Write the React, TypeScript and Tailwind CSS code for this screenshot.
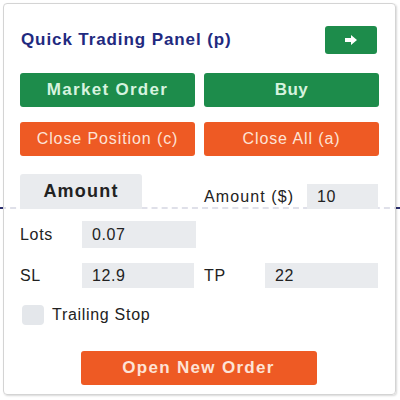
import React, { useState } from 'react';

export default function App() {
  const [amount, setAmount] = useState('10');
  const [lots, setLots] = useState('0.07');
  const [sl, setSl] = useState('12.9');
  const [tp, setTp] = useState('22');
  const [trailing, setTrailing] = useState(false);

  const input =
    'h-full w-full bg-[#e9ebee] px-[10px] text-[16px] tracking-[0.6px] text-[#222] outline-none';
  const label = 'text-[16px] tracking-[0.7px] text-[#222]';

  return (
    <div className="relative h-[400px] w-[400px] bg-white font-['Liberation_Sans',Arial,sans-serif]">
      {/* chart price line behind the panel */}
      <div className="absolute left-0 right-0 top-[207px] border-t-2 border-dashed border-[#2b2f6e]" />

      <div className="absolute left-[3px] top-[3px] flex h-[392px] w-[393px] flex-col rounded-[4px] border border-[#d4d4d4] bg-white/85 px-[16px] shadow-[1px_1px_2px_rgba(0,0,0,0.15)]">
        <div className="mt-[22px] flex h-[28px] items-center justify-between">
          <h1 className="ml-[1px] text-[17px] font-bold tracking-[0.9px] text-[#1f2a80]">Quick Trading Panel (p)</h1>
          <button className="mr-[2px] flex h-[28px] w-[52px] items-center justify-center rounded-[3px] bg-[#1d8c4b]">
            <svg width="14" height="12" viewBox="0 0 14 12">
              <path d="M1 4h6V1l6 5-6 5V8H1z" fill="#fff" />
            </svg>
          </button>
        </div>

        <div className="mt-[19px] grid grid-cols-2 gap-[9px]">
          <button className="h-[34px] rounded-[3px] bg-[#1d8c4b] text-[17px] font-bold tracking-[1.3px] text-[#d6f3df]">
            Market Order
          </button>
          <button className="h-[34px] rounded-[3px] bg-[#1d8c4b] text-[17px] font-bold tracking-[0.5px] text-[#d6f3df]">
            Buy
          </button>
        </div>

        <div className="mt-[15px] grid grid-cols-2 gap-[9px]">
          <button className="h-[34px] rounded-[3px] bg-[#ee5a24] text-[16px] tracking-[0.9px] text-[#fde3d6]">
            Close Position (c)
          </button>
          <button className="h-[34px] rounded-[3px] bg-[#ee5a24] text-[16px] tracking-[0.9px] text-[#fde3d6]">
            Close All (a)
          </button>
        </div>

        <div className="mt-[18px] flex items-start">
          <div className="flex h-[35px] w-[122px] items-center justify-center rounded-t-[3px] bg-[#e9ebee] text-[18px] font-bold tracking-[1.2px] text-[#222]">
            Amount
          </div>
          <div className="ml-[62px] mt-[10px] flex h-[25px] items-center">
            <span className="w-[103px] text-[16px] tracking-[1.1px] text-[#222]">Amount ($)</span>
            <div className="h-[25px] w-[71px]">
              <input className={input} value={amount} onChange={(e) => setAmount(e.target.value)} />
            </div>
          </div>
        </div>

        <div className="mt-[12px] flex h-[27px] items-center">
          <span className={`w-[62px] ${label}`}>Lots</span>
          <div className="h-[27px] w-[114px]">
            <input className={input} value={lots} onChange={(e) => setLots(e.target.value)} />
          </div>
        </div>

        <div className="mt-[15px] flex h-[25px] items-center">
          <span className={`w-[62px] ${label}`}>SL</span>
          <div className="h-[25px] w-[112px]">
            <input className={input} value={sl} onChange={(e) => setSl(e.target.value)} />
          </div>
          <span className={`ml-[10px] w-[61px] ${label}`}>TP</span>
          <div className="h-[25px] w-[113px]">
            <input className={input} value={tp} onChange={(e) => setTp(e.target.value)} />
          </div>
        </div>

        <label className="ml-[2px] mt-[15px] flex items-center gap-[8px]">
          <span
            onClick={() => setTrailing(!trailing)}
            className="h-[20px] w-[22px] rounded-[4px] bg-[#e4e7eb]"
          />
          <span className={label}>Trailing Stop</span>
        </label>

        <div className="mt-[24px] flex justify-center">
          <button className="mr-[2px] h-[34px] w-[236px] rounded-[3px] bg-[#ee5a24] text-[17px] font-bold tracking-[1.3px] text-[#fde3d6]">
            Open New Order
          </button>
        </div>
      </div>
    </div>
  );
}
